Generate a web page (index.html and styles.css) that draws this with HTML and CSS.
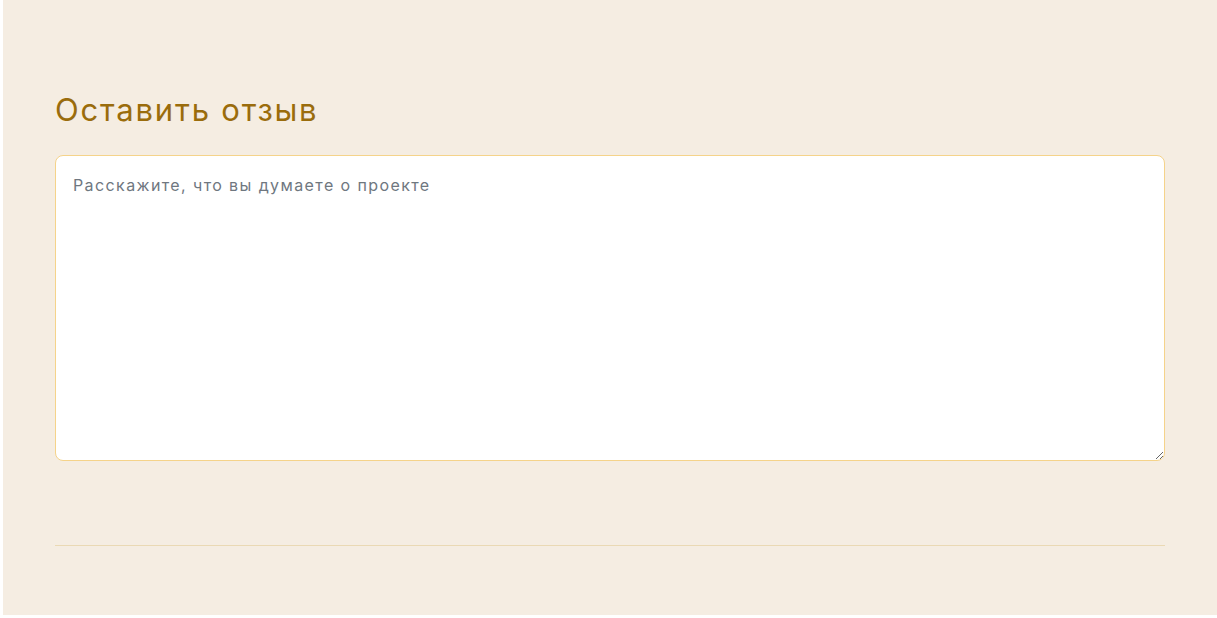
FILE: index.html
```html
<!DOCTYPE html>
<html lang="ru">
<head>
<meta charset="utf-8">
<title>Оставить отзыв</title>
<link rel="stylesheet" href="styles.css">
</head>
<body>
<section class="review">
  <h2 class="review__title">Оставить отзыв</h2>
  <textarea class="review__input" placeholder="Расскажите, что вы думаете о проекте"></textarea>
  <hr class="review__divider">
</section>
</body>
</html>
```
FILE: styles.css
```css
html, body {
  margin: 0;
  padding: 0;
  background: #ffffff;
}
body {
  padding: 0 0 3px 3px;
  font-family: "Inter", "Open Sans", sans-serif;
}
.review {
  background: #f5ede2;
  height: 615px;
  box-sizing: border-box;
  padding: 92px 52px 0 52px;
  display: flex;
  flex-direction: column;
}
.review__title {
  margin: 0 0 27px 0;
  font-size: 31px;
  line-height: 36px;
  font-weight: 400;
  letter-spacing: 1.8px;
  color: #9a6c0c;
}
.review__input {
  display: block;
  height: 306px;
  box-sizing: border-box;
  width: 100%;
  border: 1px solid #f5d38a;
  border-radius: 8px;
  background: #ffffff;
  padding: 17px 17px;
  font-family: inherit;
  font-size: 16px;
  line-height: 24px;
  letter-spacing: 1.4px;
  color: #333;
  outline: none;
}
.review__input::placeholder {
  color: #6f777f;
}
.review__divider {
  margin: 84px 0 0 0;
  border: 0;
  border-top: 1px solid #ead9b4;
  height: 0;
}
```
